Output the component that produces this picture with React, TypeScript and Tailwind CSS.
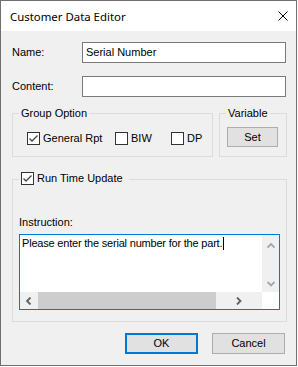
function Check({ checked }: { checked?: boolean }) {
  return (
    <span className="flex h-[13px] w-[13px] shrink-0 items-center justify-center border border-[#333333] bg-white">
      {checked && (
        <svg width="11" height="11" viewBox="0 0 11 11">
          <path d="M1.5 5.5 L4 8 L9.5 2.5" fill="none" stroke="#444444" strokeWidth="1.3" />
        </svg>
      )}
    </span>
  )
}

function Chevron({ dir, color }: { dir: 'up' | 'down' | 'left' | 'right'; color: string }) {
  const d = {
    up: 'M0.5 4.5 L4 1 L7.5 4.5',
    down: 'M0.5 1 L4 4.5 L7.5 1',
    left: 'M4.5 0.5 L1 4 L4.5 7.5',
    right: 'M1 0.5 L4.5 4 L1 7.5',
  }[dir]
  const vertical = dir === 'up' || dir === 'down'
  return (
    <svg width={vertical ? 8 : 6} height={vertical ? 6 : 8} viewBox={vertical ? '0 0 8 6' : '0 0 6 8'}>
      <path d={d} fill="none" stroke={color} strokeWidth="1.8" />
    </svg>
  )
}

export default function App() {
  return (
    <div className="h-[367px] w-[298px] bg-white">
      <div className="flex h-[366px] w-[297px] flex-col border border-[#6f6f6f] bg-[#f0f0f0] font-['Liberation_Sans',Arial,sans-serif] text-[11px] leading-[13px] text-black">
        {/* title bar */}
        <div className="flex h-[30px] shrink-0 items-center justify-between bg-white pl-[9px] pr-[8px]">
          <span className="font-['Noto_Sans',sans-serif] text-[11.4px] text-[#000000]">Customer Data Editor</span>
          <svg width="10" height="10" viewBox="0 0 10 10">
            <path d="M0.5 0.5 L9.5 9.5 M9.5 0.5 L0.5 9.5" stroke="#000" strokeWidth="1" />
          </svg>
        </div>

        <div className="flex flex-col pl-[11px] pr-[9px] pt-[11px]">
          <div className="flex h-[21px] items-center">
            <span className="w-[70px]">Name:</span>
            <div className="flex h-[21px] w-[204px] items-center border border-[#7a7a7a] bg-white pl-[3px]">
              Serial Number
            </div>
          </div>
          <div className="mt-[13px] flex h-[21px] items-center">
            <span className="w-[70px]">Content:</span>
            <div className="h-[21px] w-[204px] border border-[#7a7a7a] bg-white" />
          </div>

          <div className="mt-[16px] flex gap-[6px]">
            <div className="relative h-[44px] w-[201px] border border-[#dcdcdc]">
              <span className="absolute left-[6px] top-[-7px] bg-[#f0f0f0] px-[2px]">Group Option</span>
              <div className="flex items-center pl-[14px] pt-[18px]">
                <label className="flex w-[88px] items-center gap-[3px]">
                  <Check checked />
                  General Rpt
                </label>
                <label className="flex w-[56px] items-center gap-[3px]">
                  <Check />
                  BIW
                </label>
                <label className="flex items-center gap-[3px]">
                  <Check />
                  DP
                </label>
              </div>
            </div>
            <div className="relative h-[44px] w-[68px] border border-[#dcdcdc]">
              <span className="absolute left-[6px] top-[-7px] bg-[#f0f0f0] px-[2px]">Variable</span>
              <div className="ml-[7px] mt-[13px] flex h-[20px] w-[51px] items-center justify-center border border-[#adadad] bg-[#e1e1e1]">
                Set
              </div>
            </div>
          </div>

          <div className="relative mt-[22px] h-[143px] w-[275px] border border-[#dcdcdc]">
            <div className="absolute left-[6px] top-[-8px] flex items-center gap-[3px] bg-[#f0f0f0] px-[2px]">
              <Check checked />
              <span className="pr-[4px]">Run Time Update</span>
            </div>
            <div className="pl-[6px] pt-[36px]">
              <div className="h-[13px]">Instruction:</div>
              <div className="mt-[5px] flex h-[76px] w-[261px] flex-col border border-[#0078d7] bg-white">
                <div className="flex h-[57px]">
                  <div className="flex-1 pl-[2px] pt-[2px] tracking-[-0.2px]">
                    Please enter the serial number for the part.<span className="ml-[1px] inline-block h-[13px] w-[1px] bg-black align-top" />
                  </div>
                  <div className="flex w-[17px] flex-col items-center justify-between bg-[#f0f0f0] pb-[5px] pt-[8px]">
                    <Chevron dir="up" color="#a6a6a6" />
                    <Chevron dir="down" color="#a6a6a6" />
                  </div>
                </div>
                <div className="flex h-[17px]">
                  <div className="flex w-[242px] items-center bg-[#f0f0f0]">
                    <div className="flex w-[17px] justify-center">
                      <Chevron dir="left" color="#606060" />
                    </div>
                    <div className="ml-[1px] h-[17px] w-[178px] bg-[#cdcdcd]" />
                    <div className="flex flex-1 justify-center">
                      <Chevron dir="right" color="#606060" />
                    </div>
                  </div>
                  <div className="flex-1 bg-white" />
                </div>
              </div>
            </div>
          </div>

          <div className="mt-[11px] flex justify-end gap-[14px] pr-[2px]">
            <div className="flex h-[21px] w-[73px] items-center justify-center border-2 border-[#0078d7] bg-[#e1e1e1]">
              OK
            </div>
            <div className="flex h-[21px] w-[73px] items-center justify-center border border-[#adadad] bg-[#e1e1e1]">
              Cancel
            </div>
          </div>
        </div>
      </div>
    </div>
  )
}
